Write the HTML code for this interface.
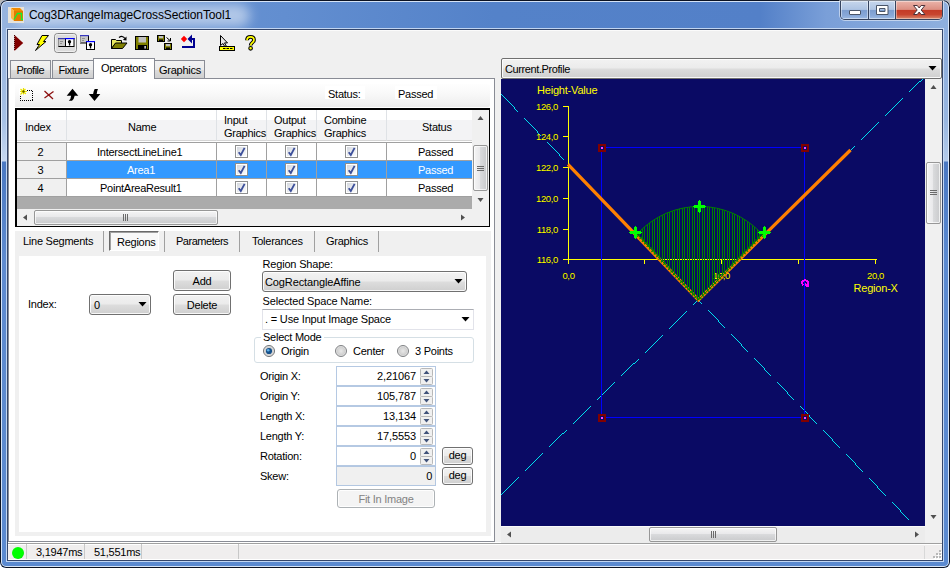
<!DOCTYPE html>
<html><head><meta charset="utf-8"><title>Cog3DRangeImageCrossSectionTool1</title>
<style>
*{box-sizing:border-box;margin:0;padding:0}
html,body{width:950px;height:568px;overflow:hidden;background:#fff}
body{font-family:"Liberation Sans",sans-serif;font-size:11px;color:#000;position:relative;letter-spacing:-0.25px}
.a{position:absolute}
.t{position:absolute;white-space:pre;line-height:13px;height:13px}
/* window frame */
#frame{left:0;top:0;width:950px;height:568px;border-radius:7px 7px 6px 6px;background:#5b8ad0;overflow:hidden}
#frame:after{content:"";position:absolute;left:0;top:0;right:0;bottom:0;border-radius:7px 7px 6px 6px;box-shadow:inset 0 0 0 1px #0b1222, inset 0 0 0 2px rgba(225,236,250,.92)}
#tbar{left:0;top:0;width:950px;height:30px;background:linear-gradient(90deg,#9ab6e0 0%,#7fa3d9 3%,#6a95d3 12%,#628ed0 30%,#5482c9 52%,#5380c8 80%,#7a9fd8 87%,#8fb0de 100%)}
#sideL{left:0;top:30px;width:8px;height:538px;background:linear-gradient(180deg,#98b4de 0px,#a6c0e5 90px,#c6d7ef 131px,#4a78c2 132px,#5f8bcf 230px,#5b8ad0 100%)}
#sideR{left:942px;top:30px;width:8px;height:538px;background:linear-gradient(180deg,#8aabdb 0px,#98b6e0 90px,#b4cbea 131px,#4a78c2 132px,#5b8ad0 230px,#5b8ad0 100%)}
#glow{left:14px;top:4px;width:236px;height:23px;border-radius:12px;background:rgba(255,255,255,.5);filter:blur(6px)}
#client{left:8px;top:30px;width:934px;height:530px;background:#f0f0f0;box-shadow:0 0 0 1px #34466a, 0 0 0 2px rgba(205,222,245,.9)}
.btn{position:absolute;border:1px solid #707070;border-radius:3px;background:linear-gradient(#f2f2f2 0%,#ebebeb 48%,#dddddd 52%,#cfcfcf 100%);box-shadow:inset 0 0 0 1px rgba(255,255,255,.85);text-align:center;white-space:pre}
.sep{position:absolute;width:1px;background:#a0a0a0}
.gh{position:absolute;background:linear-gradient(#ffffff 0px,#ffffff 10px,#f3f3f5 10px,#f3f3f5 100%);border-right:1px solid #dfe2e6;border-bottom:1px solid #d5d5d5}
.cb{position:absolute;width:13px;height:13px;border:1px solid #8e8f8f;background:linear-gradient(135deg,#cfd3da 0%,#e8eaee 50%,#ffffff 100%);box-shadow:inset 0 0 0 1px #fff}
.num{position:absolute;left:336px;width:100px;height:20px;border:1px solid #b5c9e3;background:#fff}
.spin{position:absolute;left:83px;top:1px;width:13px;height:17px}
</style></head><body>
<div class="a" style="left:0;top:0;width:950px;height:8px;background:#b8b8b8"></div>
<div id="frame" class="a">
<div id="tbar" class="a"></div><div id="sideL" class="a"></div><div id="sideR" class="a"></div>
<div id="glow" class="a"></div>
<div id="client" class="a"></div>
</div>

<!-- TITLE BAR -->
<svg class="a" style="left:8px;top:7px" width="16" height="16" viewBox="8 7 16 16"><rect x="8" y="7" width="16" height="16" fill="#e6e2da"/><polygon points="11,8 20,8 23,11 14,11" fill="#f08a00"/><polygon points="11,8 14,11 14,21 11,18" fill="#ffb347"/><rect x="14" y="11" width="9" height="10" fill="#e27a00"/><polyline points="14,19.500 17.500,13.500 21.500,13.500 21.500,19.500 23,19.500" fill="none" stroke="#10f030" stroke-width="1.300"/></svg>
<div class="t" style="left:29px;top:8px;font-size:12px;line-height:15px;height:15px;letter-spacing:-0.13px;color:#000">Cog3DRangeImageCrossSectionTool1</div>
<div class="a" id="capbtns" style="left:840px;top:1px;width:103px;height:19px;border:1px solid #35435e;border-top:none;border-radius:0 0 5px 5px;overflow:hidden;box-shadow:0 0 0 1px rgba(255,255,255,.5)">
 <div class="a" style="left:0;top:0;width:28px;height:18px;background:linear-gradient(#c6d6ec 0%,#aec4e3 47%,#7c9dcf 50%,#88a8d8 80%,#9dbbe4 100%);border-right:1px solid #35435e;box-shadow:inset 0 0 0 1px rgba(255,255,255,.45)"></div>
 <div class="a" style="left:28px;top:0;width:27px;height:18px;background:linear-gradient(#c6d6ec 0%,#aec4e3 47%,#7c9dcf 50%,#88a8d8 80%,#9dbbe4 100%);border-right:1px solid #35435e;box-shadow:inset 0 0 0 1px rgba(255,255,255,.45)"></div>
 <div class="a" style="left:55px;top:0;width:47px;height:18px;background:linear-gradient(#eab4aa 0%,#dc8f82 47%,#c43a26 50%,#c8452f 75%,#d98a6e 100%);box-shadow:inset 0 0 0 1px rgba(255,255,255,.4)"></div>
 <svg class="a" style="left:0;top:0" width="101" height="18" viewBox="0 0 101 18">
  <rect x="8.500" y="9.500" width="11" height="4" rx=".5" fill="#fff" stroke="#4a5568" stroke-width="1"/>
  <path d="M35.500 4.500h11.500v9h-11.500z M38.500 7.500h5.500v3h-5.500z" fill="#fff" fill-rule="evenodd" stroke="#4a5568" stroke-width="1"/>
  <path d="M72.500 4.500h3.800l1.900 2.500 1.900-2.500h3.800l-3.700 4.500 3.700 4.500h-3.800l-1.900-2.500-1.900 2.500h-3.800l3.700-4.500z" fill="#fff" stroke="#4a3038" stroke-width="1"/>
 </svg>
</div>


<!-- TOOLBAR -->
<div class="a" style="left:8px;top:30px;width:934px;height:1px;background:#fbfbfb"></div>
<svg class="a" style="left:0;top:30px" width="270" height="27" viewBox="0 30 270 27">
 <!-- run -->
 <polygon points="14.500,35 14.500,51 23.200,43" fill="#800000"/>
 <path d="M14.500 35v16" stroke="#400000" stroke-width="1" stroke-dasharray="1 1"/>
 <!-- lightning -->
 <polygon points="42,35.500 48.500,35.500 43.500,41.500 46,41.500 35.500,50.500 39.500,44.500 37,44.500" fill="#ffff00" stroke="#000" stroke-width="1" stroke-linejoin="miter"/>
 <!-- pressed button -->
 <rect x="54.500" y="33.500" width="22" height="19" rx="3" fill="#dcdcdc" stroke="#858585"/>
 <rect x="55.500" y="34.500" width="20" height="17" rx="2" fill="none" stroke="#efefef"/>
 <!-- two panes -->
 <rect x="58.500" y="38.500" width="7" height="8" fill="#c8c8c8" stroke="#000"/>
 <path d="M58.500 39v7.500" stroke="#909090"/>
 <rect x="58" y="38" width="8" height="1.200" fill="#3838a8"/>
 <path d="M60 41.500h3M60 43.500h2" stroke="#909090"/>
 <rect x="65.500" y="38.500" width="8.500" height="8" fill="#fff" stroke="#000"/>
 <rect x="65" y="38" width="9.500" height="1.200" fill="#0000ff"/>
 <circle cx="69.500" cy="41.700" r="1.700" fill="#000"/><rect x="68.900" y="42" width="1.300" height="3.500" fill="#000"/>
 <!-- floating panes -->
 <rect x="80.500" y="35.500" width="8" height="7.500" fill="#c8c8c8" stroke="#000"/>
 <path d="M80.500 36v7" stroke="#909090"/>
 <rect x="80" y="35" width="9" height="1.200" fill="#3838c0"/>
 <path d="M82 38.500h3M82 40.500h2" stroke="#909090"/>
 <rect x="86.500" y="41.500" width="8" height="8" fill="#fff" stroke="#000"/>
 <rect x="86" y="41" width="9" height="1.200" fill="#0000ff"/>
 <circle cx="90.500" cy="44.700" r="1.700" fill="#000"/><rect x="89.900" y="45" width="1.300" height="3.500" fill="#000"/>
 <!-- open folder -->
 <path d="M111.500 39.500h4l1 1h5v3h-6l-4 5z" fill="#e8e860" stroke="#000"/>
 <path d="M111.500 48.500l4-5.500h11.500l-4.500 5.500z" fill="#808000" stroke="#000"/>
 <path d="M119 37.500q3.500-2.500 6 1" fill="none" stroke="#000" stroke-width="1.200"/><polygon points="126.500,36.500 126.500,40.500 122.800,40" fill="#000"/>
 <!-- save -->
 <rect x="135.500" y="36.500" width="13" height="13" fill="#808000" stroke="#000"/>
 <rect x="138.500" y="37" width="7.500" height="5.500" fill="#c0c0c0"/>
 <rect x="138" y="45" width="9" height="4.500" fill="#000"/><rect x="144.300" y="46" width="1.700" height="2.600" fill="#c0c0c0"/>
 <!-- save all -->
 <rect x="157.500" y="35.500" width="7" height="6" fill="#808000" stroke="#000"/><rect x="159" y="36" width="4" height="2.200" fill="#c0c0c0"/><rect x="159" y="39.500" width="4" height="2" fill="#000"/>
 <rect x="164.500" y="43.500" width="7" height="6" fill="#808000" stroke="#000"/><rect x="166" y="44" width="4" height="2.200" fill="#c0c0c0"/><rect x="166" y="47.500" width="4" height="2" fill="#000"/>
 <path d="M166.500 37.500l3.500 3M170.500 38v3h-3" stroke="#000" fill="none"/>
 <!-- reset -->
 <polygon points="180.800,39 184,35.800 187.200,39 184,42.200" fill="#ff0000"/>
 <path d="M182 47h12v-8h-3" fill="none" stroke="#000090" stroke-width="2"/>
 <polygon points="187.500,39 192,34.500 192,43.500" fill="#000090"/>
 <!-- pointer / ruler -->
 <path d="M220.500 35.500v10l2.500-2 1.800 3.200 1.400-.8-1.700-3h3z" fill="#e8e8e8" stroke="#000"/>
 <rect x="219.500" y="46.500" width="15" height="4" fill="#ffff00" stroke="#000"/>
 <path d="M223 48.500h9.500" stroke="#000" stroke-dasharray="2.500 1"/>
 <!-- help -->
 <path d="M247 40.300q0-3.500 3.500-3.500t3.500 3.300q0 1.600-2 2.900q-1.300.9-1.300 2.600" fill="none" stroke="#000" stroke-width="3.800"/>
 <path d="M247 40.300q0-3.500 3.500-3.500t3.500 3.300q0 1.600-2 2.900q-1.300.9-1.300 2.600" fill="none" stroke="#ffff00" stroke-width="1.700"/>
 <circle cx="250.600" cy="48.300" r="1.800" fill="#ffff00" stroke="#000" stroke-width="1.100"/>
</svg>

<!-- MAIN TABS -->
<div class="a" style="left:8px;top:78px;width:487px;height:464px;border:1px solid #898c95;background:#fff"></div>
<div class="a" style="left:10px;top:60px;width:41px;height:18px;border:1px solid #898c95;border-bottom:none;background:linear-gradient(#f2f2f2 0%,#ebebeb 50%,#dddddd 50%,#cfcfcf 100%)"></div>
<div class="a" style="left:52px;top:60px;width:42px;height:18px;border:1px solid #898c95;border-bottom:none;background:linear-gradient(#f2f2f2 0%,#ebebeb 50%,#dddddd 50%,#cfcfcf 100%)"></div>
<div class="a" style="left:154px;top:60px;width:51px;height:18px;border:1px solid #898c95;border-bottom:none;border-left:none;background:linear-gradient(#f2f2f2 0%,#ebebeb 50%,#dddddd 50%,#cfcfcf 100%)"></div>
<div class="a" style="left:93px;top:58px;width:62px;height:21px;border:1px solid #898c95;border-bottom:none;background:#fff"></div>
<div class="t" style="left:16.500px;top:64px;letter-spacing:-0.5px">Profile</div>
<div class="t" style="left:58.500px;top:64px;letter-spacing:-0.5px">Fixture</div>
<div class="t" style="left:101px;top:62px;letter-spacing:-0.4px">Operators</div>
<div class="t" style="left:159px;top:64px">Graphics</div>

<!-- operator toolbar -->
<div class="a" style="left:15px;top:84px;width:475px;height:23px;background:linear-gradient(#fefefe 0%,#f8f8f8 45%,#f0f0f0 85%,#ebebeb 100%);border-radius:0 2px 2px 0"></div>
<svg class="a" style="left:15px;top:85px" width="100" height="20" viewBox="15 85 100 20">
 <path d="M20.500 90.500h12v10h-12z" fill="none" stroke="#000" stroke-width="1" stroke-dasharray="1 1" shape-rendering="crispEdges"/>
 <rect x="19" y="88" width="8" height="7" fill="#fff"/>
 <path d="M20.500 89l5.500 5M25.500 89l-5 5.500M23.500 88v6.500M20 91.500h7" stroke="#e8e000" stroke-width="1.200"/>
 <path d="M22 91.500l3 0M23.500 90v3" stroke="#404000" stroke-width=".6"/>
 <path d="M44.500 91l8.500 8M53.500 91.500l-9 6.500" stroke="#8c1010" stroke-width="1.300" fill="none"/>
 <path d="M72.500 88.800l5.800 6.900h-3.600q-.6 3.200-2.700 5.100h-3.200q2.200-2 2.300-5.100h-4.400z" fill="#000"/>
 <path d="M94.500 100.900l5.800-6.900h-3.600q.2-3 1.300-5.100h-3.300q-1.400 2.300-1.600 5.100h-4.400z" fill="#000"/>
</svg>
<div class="a" style="left:325px;top:86px;width:40px;height:13px;background:#fff"></div>
<div class="a" style="left:395px;top:86px;width:42px;height:13px;background:#fff"></div>
<div class="t" style="left:328px;top:88px">Status:</div>
<div class="t" style="left:398px;top:88px">Passed</div>


<!-- GRID -->
<div class="a" style="left:15px;top:108px;width:475px;height:119px;border:1px solid #000;border-top-width:2px;border-left-width:2px;background:#ababab"></div>
<div class="gh" style="left:17px;top:110px;width:50px;height:31px"></div>
<div class="gh" style="left:67px;top:110px;width:150px;height:31px"></div>
<div class="gh" style="left:217px;top:110px;width:50px;height:31px"></div>
<div class="gh" style="left:267px;top:110px;width:50px;height:31px"></div>
<div class="gh" style="left:317px;top:110px;width:70px;height:31px"></div>
<div class="gh" style="left:387px;top:110px;width:86px;height:31px"></div>
<div class="a" style="left:17px;top:141px;width:455px;height:2px;background:#fff;border-bottom:1px solid #a0a0a0"></div>
<div class="t" style="left:25px;top:121px">Index</div>
<div class="t" style="left:128px;top:121px">Name</div>
<div class="t" style="left:224px;top:114px">Input</div>
<div class="t" style="left:224px;top:127px">Graphics</div>
<div class="t" style="left:274px;top:114px">Output</div>
<div class="t" style="left:274px;top:127px">Graphics</div>
<div class="t" style="left:324px;top:114px">Combine</div>
<div class="t" style="left:324px;top:127px">Graphics</div>
<div class="t" style="left:422px;top:121px">Status</div>
<div class="a" style="left:17px;top:143px;width:50px;height:18px;background:#f0f0f0;border-right:1px solid #a0a0a0;border-bottom:1px solid #a0a0a0"></div><div class="t" style="left:37.500px;top:146px">2</div><div class="a" style="left:67px;top:143px;width:150px;height:18px;background:#fff;border-right:1px solid #a0a0a0;border-bottom:1px solid #a0a0a0"></div><div class="a" style="left:217px;top:143px;width:50px;height:18px;background:#fff;border-right:1px solid #a0a0a0;border-bottom:1px solid #a0a0a0"></div><div class="a" style="left:267px;top:143px;width:50px;height:18px;background:#fff;border-right:1px solid #a0a0a0;border-bottom:1px solid #a0a0a0"></div><div class="a" style="left:317px;top:143px;width:70px;height:18px;background:#fff;border-right:1px solid #a0a0a0;border-bottom:1px solid #a0a0a0"></div><div class="a" style="left:387px;top:143px;width:86px;height:18px;background:#fff;border-right:1px solid #a0a0a0;border-bottom:1px solid #a0a0a0"></div><div class="t" style="left:97px;top:146px;color:#000">IntersectLineLine1</div><div class="t" style="left:418px;top:146px;color:#000">Passed</div><div class="cb" style="left:235px;top:145px"></div><svg class="a" style="left:235px;top:145px" width="13" height="13" viewBox="0 0 13 13"><path d="M3.700 7.300 L5.800 10 L9.600 2.800" fill="none" stroke="#3c4f9a" stroke-width="1.800"/></svg><div class="cb" style="left:285px;top:145px"></div><svg class="a" style="left:285px;top:145px" width="13" height="13" viewBox="0 0 13 13"><path d="M3.700 7.300 L5.800 10 L9.600 2.800" fill="none" stroke="#3c4f9a" stroke-width="1.800"/></svg><div class="cb" style="left:345px;top:145px"></div><svg class="a" style="left:345px;top:145px" width="13" height="13" viewBox="0 0 13 13"><path d="M3.700 7.300 L5.800 10 L9.600 2.800" fill="none" stroke="#3c4f9a" stroke-width="1.800"/></svg><div class="a" style="left:17px;top:161px;width:50px;height:18px;background:#f0f0f0;border-right:1px solid #a0a0a0;border-bottom:1px solid #a0a0a0"></div><div class="t" style="left:37.500px;top:164px">3</div><div class="a" style="left:67px;top:161px;width:150px;height:18px;background:#3399ff;border-right:1px solid #a0a0a0;border-bottom:1px solid #a0a0a0"></div><div class="a" style="left:217px;top:161px;width:50px;height:18px;background:#3399ff;border-right:1px solid #a0a0a0;border-bottom:1px solid #a0a0a0"></div><div class="a" style="left:267px;top:161px;width:50px;height:18px;background:#3399ff;border-right:1px solid #a0a0a0;border-bottom:1px solid #a0a0a0"></div><div class="a" style="left:317px;top:161px;width:70px;height:18px;background:#3399ff;border-right:1px solid #a0a0a0;border-bottom:1px solid #a0a0a0"></div><div class="a" style="left:387px;top:161px;width:86px;height:18px;background:#3399ff;border-right:1px solid #a0a0a0;border-bottom:1px solid #a0a0a0"></div><div class="t" style="left:127px;top:164px;color:#fff">Area1</div><div class="t" style="left:418px;top:164px;color:#fff">Passed</div><div class="cb" style="left:235px;top:163px"></div><svg class="a" style="left:235px;top:163px" width="13" height="13" viewBox="0 0 13 13"><path d="M3.700 7.300 L5.800 10 L9.600 2.800" fill="none" stroke="#3c4f9a" stroke-width="1.800"/></svg><div class="cb" style="left:285px;top:163px"></div><svg class="a" style="left:285px;top:163px" width="13" height="13" viewBox="0 0 13 13"><path d="M3.700 7.300 L5.800 10 L9.600 2.800" fill="none" stroke="#3c4f9a" stroke-width="1.800"/></svg><div class="cb" style="left:345px;top:163px"></div><svg class="a" style="left:345px;top:163px" width="13" height="13" viewBox="0 0 13 13"><path d="M3.700 7.300 L5.800 10 L9.600 2.800" fill="none" stroke="#3c4f9a" stroke-width="1.800"/></svg><div class="a" style="left:17px;top:179px;width:50px;height:18px;background:#f0f0f0;border-right:1px solid #a0a0a0;border-bottom:1px solid #a0a0a0"></div><div class="t" style="left:37.500px;top:182px">4</div><div class="a" style="left:67px;top:179px;width:150px;height:18px;background:#fff;border-right:1px solid #a0a0a0;border-bottom:1px solid #a0a0a0"></div><div class="a" style="left:217px;top:179px;width:50px;height:18px;background:#fff;border-right:1px solid #a0a0a0;border-bottom:1px solid #a0a0a0"></div><div class="a" style="left:267px;top:179px;width:50px;height:18px;background:#fff;border-right:1px solid #a0a0a0;border-bottom:1px solid #a0a0a0"></div><div class="a" style="left:317px;top:179px;width:70px;height:18px;background:#fff;border-right:1px solid #a0a0a0;border-bottom:1px solid #a0a0a0"></div><div class="a" style="left:387px;top:179px;width:86px;height:18px;background:#fff;border-right:1px solid #a0a0a0;border-bottom:1px solid #a0a0a0"></div><div class="t" style="left:100px;top:182px;color:#000">PointAreaResult1</div><div class="t" style="left:418px;top:182px;color:#000">Passed</div><div class="cb" style="left:235px;top:181px"></div><svg class="a" style="left:235px;top:181px" width="13" height="13" viewBox="0 0 13 13"><path d="M3.700 7.300 L5.800 10 L9.600 2.800" fill="none" stroke="#3c4f9a" stroke-width="1.800"/></svg><div class="cb" style="left:285px;top:181px"></div><svg class="a" style="left:285px;top:181px" width="13" height="13" viewBox="0 0 13 13"><path d="M3.700 7.300 L5.800 10 L9.600 2.800" fill="none" stroke="#3c4f9a" stroke-width="1.800"/></svg><div class="cb" style="left:345px;top:181px"></div><svg class="a" style="left:345px;top:181px" width="13" height="13" viewBox="0 0 13 13"><path d="M3.700 7.300 L5.800 10 L9.600 2.800" fill="none" stroke="#3c4f9a" stroke-width="1.800"/></svg>
<!-- grid vscroll -->
<div class="a" style="left:472px;top:110px;width:17px;height:99px;background:#f0f0f0"></div>
<div class="a" style="left:473px;top:145px;width:15px;height:46px;border:1px solid #979797;border-radius:2px;background:linear-gradient(90deg,#f5f5f5 0%,#e9e9eb 45%,#d9dadc 50%,#c9cacc 100%);box-shadow:inset 0 0 0 1px rgba(255,255,255,.7)"></div>
<svg class="a" style="left:472px;top:110px" width="17" height="98" viewBox="0 0 17 98"><polygon points="5.500,10 8.500,6 11.500,10" fill="#505050"/><polygon points="5.500,88 8.500,92 11.500,88" fill="#505050"/><path d="M5 56.500h7M5 58.500h7M5 60.500h7" stroke="#6a6a6a"/></svg>
<!-- grid hscroll -->
<div class="a" style="left:17px;top:209px;width:472px;height:17px;background:#f0f0f0"></div>
<div class="a" style="left:34px;top:210px;width:184px;height:15px;border:1px solid #979797;border-radius:2px;background:linear-gradient(#f5f5f5 0%,#e9e9eb 45%,#d9dadc 50%,#c9cacc 100%);box-shadow:inset 0 0 0 1px rgba(255,255,255,.7)"></div>
<svg class="a" style="left:17px;top:209px" width="472" height="17" viewBox="0 0 472 17"><polygon points="10,5.500 6,8.500 10,11.500" fill="#505050"/><polygon points="444,5.500 448,8.500 444,11.500" fill="#505050"/><path d="M106.500 5v7M108.500 5v7M110.500 5v7" stroke="#6a6a6a"/></svg>

<!-- INNER TABS -->
<div class="a" style="left:15px;top:231px;width:476px;height:305px;background:#f0f0f0"></div>
<div class="a" style="left:19px;top:256px;width:467px;height:276px;background:#fff"></div>
<div class="sep" style="left:103px;top:231px;height:21px"></div>
<div class="sep" style="left:164px;top:231px;height:21px"></div>
<div class="sep" style="left:239px;top:231px;height:21px"></div>
<div class="sep" style="left:314px;top:231px;height:21px"></div>
<div class="sep" style="left:378px;top:231px;height:21px"></div>
<div class="a" style="left:109px;top:231px;width:50px;height:20px;border:1px solid #696969;border-right-color:#fff;border-bottom-color:#fff;background:#f8f8f8;box-shadow:inset 1px 1px 0 #a0a0a0"></div>
<div class="t" style="left:23px;top:235px">Line Segments</div>
<div class="t" style="left:117px;top:236px">Regions</div>
<div class="t" style="left:176px;top:235px;letter-spacing:-0.47px">Parameters</div>
<div class="t" style="left:252px;top:235px">Tolerances</div>
<div class="t" style="left:326px;top:235px">Graphics</div>

<div class="btn" style="left:173px;top:270px;width:58px;height:21px;line-height:20px">Add</div>
<div class="btn" style="left:173px;top:294px;width:58px;height:21px;line-height:20px">Delete</div>
<div class="t" style="left:28px;top:298px">Index:</div>
<div class="btn" style="left:89px;top:294px;width:62px;height:21px;line-height:20px;text-align:left;padding-left:4px">0</div>
<svg class="a" style="left:138px;top:302px" width="9" height="5"><polygon points="0.500,0 8.500,0 4.500,4.500" fill="#000"/></svg>

<div class="t" style="left:262.500px;top:258px;letter-spacing:-0.18px">Region Shape:</div>
<div class="btn" style="left:262px;top:271px;width:205px;height:21px;line-height:20px;text-align:left;padding-left:2px;letter-spacing:-0.12px">CogRectangleAffine</div>
<svg class="a" style="left:454px;top:279px" width="9" height="5"><polygon points="0.500,0 8.500,0 4.500,4.500" fill="#000"/></svg>
<div class="t" style="left:262.500px;top:295px;letter-spacing:-0.15px">Selected Space Name:</div>
<div class="a" style="left:262px;top:309px;width:212px;height:21px;border:1px solid #e2e3ea;border-top-color:#abadb3;background:#fff"></div>
<div class="t" style="left:265px;top:313px;letter-spacing:-0.18px">. = Use Input Image Space</div>
<svg class="a" style="left:461px;top:317px" width="9" height="5"><polygon points="0.500,0 8.500,0 4.500,4.500" fill="#000"/></svg>

<div class="a" style="left:254px;top:337px;width:220px;height:26px;border:1px solid #d5dfe5;border-radius:3px"></div>
<div class="a" style="left:261px;top:332px;width:63px;height:13px;background:#fff"></div>
<div class="t" style="left:263px;top:331px">Select Mode</div>
<svg class="a" style="left:262px;top:344px" width="150" height="14" viewBox="0 0 150 14">
 <defs><radialGradient id="rg" cx=".5" cy=".5" r=".5"><stop offset="0" stop-color="#e8e8e8"/><stop offset=".7" stop-color="#d0d0d0"/><stop offset="1" stop-color="#f4f4f4"/></radialGradient></defs>
 <circle cx="7" cy="7" r="5.500" fill="url(#rg)" stroke="#6e7073"/><circle cx="7" cy="7" r="3.100" fill="#15508a"/><circle cx="6.200" cy="6.200" r="1.300" fill="#5fb0e8"/>
 <circle cx="79" cy="7" r="5.500" fill="url(#rg)" stroke="#7e8083"/>
 <circle cx="141" cy="7" r="5.500" fill="url(#rg)" stroke="#7e8083"/>
</svg>
<div class="t" style="left:281px;top:345px">Origin</div>
<div class="t" style="left:353px;top:345px">Center</div>
<div class="t" style="left:415px;top:345px">3 Points</div>
<div class="t" style="left:260px;top:370px">Origin X:</div><div class="num" style="top:366px"><svg class="spin" width="13" height="17" viewBox="0 0 13 17"><rect x=".5" y=".5" width="12" height="8" rx="1" fill="#f0f0f0" stroke="#b8b8b8"/><rect x=".5" y="8.500" width="12" height="8" rx="1" fill="#f0f0f0" stroke="#b8b8b8"/><polygon points="3.500,6 6.500,2.500 9.500,6" fill="#40527a"/><polygon points="3.500,11 6.500,14.500 9.500,11" fill="#40527a"/></svg></div><div class="t" style="left:340px;width:76px;text-align:right;top:370px;letter-spacing:-0.1px">2,21067</div><div class="t" style="left:260px;top:390px">Origin Y:</div><div class="num" style="top:386px"><svg class="spin" width="13" height="17" viewBox="0 0 13 17"><rect x=".5" y=".5" width="12" height="8" rx="1" fill="#f0f0f0" stroke="#b8b8b8"/><rect x=".5" y="8.500" width="12" height="8" rx="1" fill="#f0f0f0" stroke="#b8b8b8"/><polygon points="3.500,6 6.500,2.500 9.500,6" fill="#40527a"/><polygon points="3.500,11 6.500,14.500 9.500,11" fill="#40527a"/></svg></div><div class="t" style="left:340px;width:76px;text-align:right;top:390px;letter-spacing:-0.1px">105,787</div><div class="t" style="left:260px;top:410px">Length X:</div><div class="num" style="top:406px"><svg class="spin" width="13" height="17" viewBox="0 0 13 17"><rect x=".5" y=".5" width="12" height="8" rx="1" fill="#f0f0f0" stroke="#b8b8b8"/><rect x=".5" y="8.500" width="12" height="8" rx="1" fill="#f0f0f0" stroke="#b8b8b8"/><polygon points="3.500,6 6.500,2.500 9.500,6" fill="#40527a"/><polygon points="3.500,11 6.500,14.500 9.500,11" fill="#40527a"/></svg></div><div class="t" style="left:340px;width:76px;text-align:right;top:410px;letter-spacing:-0.1px">13,134</div><div class="t" style="left:260px;top:430px">Length Y:</div><div class="num" style="top:426px"><svg class="spin" width="13" height="17" viewBox="0 0 13 17"><rect x=".5" y=".5" width="12" height="8" rx="1" fill="#f0f0f0" stroke="#b8b8b8"/><rect x=".5" y="8.500" width="12" height="8" rx="1" fill="#f0f0f0" stroke="#b8b8b8"/><polygon points="3.500,6 6.500,2.500 9.500,6" fill="#40527a"/><polygon points="3.500,11 6.500,14.500 9.500,11" fill="#40527a"/></svg></div><div class="t" style="left:340px;width:76px;text-align:right;top:430px;letter-spacing:-0.1px">17,5553</div><div class="t" style="left:260px;top:450px">Rotation:</div><div class="num" style="top:446px"><svg class="spin" width="13" height="17" viewBox="0 0 13 17"><rect x=".5" y=".5" width="12" height="8" rx="1" fill="#f0f0f0" stroke="#b8b8b8"/><rect x=".5" y="8.500" width="12" height="8" rx="1" fill="#f0f0f0" stroke="#b8b8b8"/><polygon points="3.500,6 6.500,2.500 9.500,6" fill="#40527a"/><polygon points="3.500,11 6.500,14.500 9.500,11" fill="#40527a"/></svg></div><div class="t" style="left:340px;width:76px;text-align:right;top:450px;letter-spacing:-0.1px">0</div><div class="t" style="left:260px;top:470px">Skew:</div><div class="num" style="top:466px;background:#f0f0f0;border-color:#b3c7e1"></div><div class="t" style="left:340px;width:92px;text-align:right;top:470px">0</div>
<div class="btn" style="left:442px;top:447px;width:31px;height:18px;line-height:14px">deg</div>
<div class="btn" style="left:442px;top:467px;width:31px;height:18px;line-height:14px">deg</div>
<div class="btn" style="left:337px;top:489px;width:98px;height:19px;line-height:18px;color:#838383;border-color:#adb2b5;background:#f4f4f4">Fit In Image</div>

<!-- STATUS BAR -->
<div class="a" style="left:8px;top:542px;width:934px;height:18px;background:#f0eeee;border-top:1px solid #fff;border-bottom:1px solid #fff"></div><div class="a" style="left:8px;top:543px;width:934px;height:2px;background:#fff;border-top:1px solid #a0a0a0"></div>
<div class="a" style="left:12px;top:547px;width:12px;height:12px;border-radius:6px;background:radial-gradient(circle at 40% 40%,#00ff00 0%,#00ff00 62%,#00a800 100%)"></div>
<div class="t" style="left:36px;top:546px">3,1947ms</div>
<div class="t" style="left:94px;top:546px">51,551ms</div>
<div class="sep" style="left:26px;top:544px;height:15px;background:#c8c8c8"></div>
<div class="sep" style="left:84px;top:544px;height:15px;background:#c8c8c8"></div>
<div class="sep" style="left:141px;top:544px;height:15px;background:#c8c8c8"></div>
<div class="sep" style="left:238px;top:544px;height:15px;background:#c8c8c8"></div>


<!-- RIGHT PANEL -->
<div class="btn" style="left:501px;top:58px;width:441px;height:21px;line-height:20px;text-align:left;padding-left:3px;border-radius:2px;letter-spacing:-0.4px">Current.Profile</div>
<svg class="a" style="left:928px;top:66px" width="9" height="5"><polygon points="0.500,0 8.500,0 4.500,4.500" fill="#000"/></svg>
<svg class="a" style="left:501px;top:79px;font-family:'Liberation Sans',sans-serif" width="424" height="447" viewBox="0 0 424 447" shape-rendering="crispEdges">
<defs><pattern id="hat" width="5" height="10" patternUnits="userSpaceOnUse" x="0"><rect x="1" y="0" width="1" height="10" fill="#008000"/><rect x="3" y="0" width="1" height="10" fill="#008000"/></pattern>
<clipPath id="sec"><path d="M197.4 221.0 L134.5 153.5 L137.5 153.6 A84.27 84.27 0 0 1 259.8 153.8 L263.5 153.5 Z"/></clipPath></defs>
<rect width="424" height="447" fill="#0a0a64"/>
<path fill="#00e0ee" d="M0 15h1v1h-1zM0 415h1v1h-1zM1 16h1v1h-1zM1 414h1v1h-1zM2 17h1v1h-1zM2 413h1v1h-1zM3 18h1v1h-1zM3 412h1v1h-1zM4 19h1v1h-1zM4 411h1v1h-1zM5 20h1v1h-1zM5 410h1v1h-1zM6 21h1v1h-1zM6 409h1v1h-1zM7 22h1v1h-1zM7 408h1v1h-1zM8 23h1v1h-1zM8 407h1v1h-1zM9 24h1v1h-1zM9 406h1v1h-1zM10 25h1v1h-1zM10 405h1v1h-1zM11 26h1v1h-1zM11 404h1v1h-1zM12 27h1v1h-1zM12 403h1v1h-1zM13 28h1v1h-1zM13 29h1v1h-1zM13 402h1v1h-1zM14 30h1v1h-1zM14 401h1v1h-1zM15 31h1v1h-1zM15 400h1v1h-1zM16 32h1v1h-1zM16 399h1v1h-1zM17 398h1v1h-1zM23 39h1v1h-1zM24 40h1v1h-1zM24 391h1v1h-1zM25 41h1v1h-1zM25 390h1v1h-1zM26 42h1v1h-1zM26 389h1v1h-1zM27 43h1v1h-1zM27 388h1v1h-1zM28 44h1v1h-1zM28 387h1v1h-1zM29 45h1v1h-1zM29 386h1v1h-1zM30 46h1v1h-1zM30 385h1v1h-1zM31 47h1v1h-1zM31 384h1v1h-1zM32 48h1v1h-1zM32 383h1v1h-1zM33 49h1v1h-1zM33 382h1v1h-1zM34 50h1v1h-1zM34 381h1v1h-1zM35 51h1v1h-1zM35 380h1v1h-1zM36 52h1v1h-1zM36 53h1v1h-1zM36 379h1v1h-1zM37 54h1v1h-1zM37 378h1v1h-1zM38 55h1v1h-1zM38 377h1v1h-1zM39 56h1v1h-1zM39 376h1v1h-1zM40 375h1v1h-1zM41 374h1v1h-1zM46 63h1v1h-1zM47 64h1v1h-1zM48 65h1v1h-1zM48 367h1v1h-1zM49 66h1v1h-1zM49 366h1v1h-1zM50 67h1v1h-1zM50 365h1v1h-1zM51 68h1v1h-1zM51 364h1v1h-1zM52 69h1v1h-1zM52 363h1v1h-1zM53 70h1v1h-1zM53 362h1v1h-1zM54 71h1v1h-1zM54 361h1v1h-1zM55 72h1v1h-1zM55 360h1v1h-1zM56 73h1v1h-1zM56 359h1v1h-1zM57 74h1v1h-1zM57 358h1v1h-1zM58 75h1v1h-1zM58 76h1v1h-1zM58 357h1v1h-1zM59 77h1v1h-1zM59 356h1v1h-1zM60 78h1v1h-1zM60 355h1v1h-1zM61 79h1v1h-1zM61 354h1v1h-1zM62 80h1v1h-1zM62 354h1v1h-1zM63 353h1v1h-1zM64 352h1v1h-1zM65 351h1v1h-1zM69 87h1v1h-1zM70 88h1v1h-1zM71 89h1v1h-1zM72 90h1v1h-1zM72 344h1v1h-1zM73 91h1v1h-1zM73 343h1v1h-1zM74 92h1v1h-1zM74 342h1v1h-1zM75 93h1v1h-1zM75 341h1v1h-1zM76 94h1v1h-1zM76 340h1v1h-1zM77 95h1v1h-1zM77 339h1v1h-1zM78 96h1v1h-1zM78 338h1v1h-1zM79 97h1v1h-1zM79 337h1v1h-1zM80 98h1v1h-1zM80 336h1v1h-1zM81 99h1v1h-1zM81 100h1v1h-1zM81 335h1v1h-1zM82 101h1v1h-1zM82 334h1v1h-1zM83 102h1v1h-1zM83 333h1v1h-1zM84 103h1v1h-1zM84 332h1v1h-1zM85 104h1v1h-1zM85 331h1v1h-1zM86 330h1v1h-1zM87 329h1v1h-1zM88 328h1v1h-1zM89 327h1v1h-1zM92 111h1v1h-1zM93 112h1v1h-1zM94 113h1v1h-1zM95 114h1v1h-1zM96 115h1v1h-1zM96 320h1v1h-1zM97 116h1v1h-1zM97 319h1v1h-1zM98 117h1v1h-1zM98 318h1v1h-1zM99 118h1v1h-1zM99 317h1v1h-1zM100 119h1v1h-1zM100 316h1v1h-1zM101 120h1v1h-1zM101 315h1v1h-1zM102 121h1v1h-1zM102 314h1v1h-1zM103 122h1v1h-1zM103 313h1v1h-1zM104 123h1v1h-1zM104 124h1v1h-1zM104 312h1v1h-1zM105 125h1v1h-1zM105 311h1v1h-1zM106 126h1v1h-1zM106 310h1v1h-1zM107 127h1v1h-1zM107 309h1v1h-1zM108 128h1v1h-1zM108 308h1v1h-1zM109 307h1v1h-1zM110 306h1v1h-1zM111 305h1v1h-1zM112 304h1v1h-1zM113 303h1v1h-1zM115 135h1v1h-1zM116 136h1v1h-1zM117 137h1v1h-1zM118 138h1v1h-1zM119 139h1v1h-1zM120 140h1v1h-1zM120 296h1v1h-1zM121 141h1v1h-1zM121 295h1v1h-1zM122 142h1v1h-1zM122 294h1v1h-1zM123 143h1v1h-1zM123 293h1v1h-1zM124 144h1v1h-1zM124 292h1v1h-1zM125 145h1v1h-1zM125 291h1v1h-1zM126 146h1v1h-1zM126 147h1v1h-1zM126 290h1v1h-1zM127 148h1v1h-1zM127 289h1v1h-1zM128 149h1v1h-1zM128 288h1v1h-1zM129 150h1v1h-1zM129 287h1v1h-1zM130 151h1v1h-1zM130 286h1v1h-1zM131 152h1v1h-1zM131 285h1v1h-1zM132 284h1v1h-1zM133 284h1v1h-1zM134 283h1v1h-1zM135 282h1v1h-1zM136 281h1v1h-1zM137 280h1v1h-1zM138 159h1v1h-1zM139 160h1v1h-1zM140 161h1v1h-1zM141 162h1v1h-1zM142 163h1v1h-1zM143 164h1v1h-1zM144 165h1v1h-1zM144 273h1v1h-1zM145 166h1v1h-1zM145 272h1v1h-1zM146 167h1v1h-1zM146 271h1v1h-1zM147 168h1v1h-1zM147 270h1v1h-1zM148 169h1v1h-1zM148 269h1v1h-1zM149 170h1v1h-1zM149 171h1v1h-1zM149 268h1v1h-1zM150 172h1v1h-1zM150 267h1v1h-1zM151 173h1v1h-1zM151 266h1v1h-1zM152 174h1v1h-1zM152 265h1v1h-1zM153 175h1v1h-1zM153 264h1v1h-1zM154 176h1v1h-1zM154 263h1v1h-1zM155 262h1v1h-1zM156 261h1v1h-1zM157 260h1v1h-1zM158 259h1v1h-1zM159 258h1v1h-1zM160 257h1v1h-1zM161 183h1v1h-1zM161 256h1v1h-1zM162 184h1v1h-1zM163 185h1v1h-1zM164 186h1v1h-1zM165 187h1v1h-1zM166 188h1v1h-1zM167 189h1v1h-1zM168 190h1v1h-1zM168 249h1v1h-1zM169 191h1v1h-1zM169 248h1v1h-1zM170 192h1v1h-1zM170 247h1v1h-1zM171 193h1v1h-1zM171 246h1v1h-1zM172 194h1v1h-1zM172 195h1v1h-1zM172 245h1v1h-1zM173 196h1v1h-1zM173 244h1v1h-1zM174 197h1v1h-1zM174 243h1v1h-1zM175 198h1v1h-1zM175 242h1v1h-1zM176 199h1v1h-1zM176 241h1v1h-1zM177 200h1v1h-1zM177 240h1v1h-1zM178 239h1v1h-1zM179 238h1v1h-1zM180 237h1v1h-1zM181 236h1v1h-1zM182 235h1v1h-1zM183 234h1v1h-1zM184 207h1v1h-1zM184 233h1v1h-1zM185 208h1v1h-1zM185 232h1v1h-1zM186 209h1v1h-1zM187 210h1v1h-1zM188 211h1v1h-1zM189 212h1v1h-1zM190 213h1v1h-1zM191 214h1v1h-1zM192 215h1v1h-1zM192 225h1v1h-1zM193 216h1v1h-1zM193 224h1v1h-1zM194 217h1v1h-1zM194 223h1v1h-1zM195 218h1v1h-1zM195 219h1v1h-1zM195 222h1v1h-1zM196 220h1v1h-1zM196 221h1v1h-1zM197 220h1v1h-1zM197 221h1v1h-1zM198 219h1v1h-1zM198 222h1v1h-1zM199 218h1v1h-1zM199 223h1v1h-1zM200 217h1v1h-1zM200 224h1v1h-1zM201 216h1v1h-1zM202 215h1v1h-1zM203 214h1v1h-1zM204 213h1v1h-1zM205 213h1v1h-1zM206 212h1v1h-1zM207 211h1v1h-1zM207 231h1v1h-1zM208 210h1v1h-1zM208 232h1v1h-1zM209 209h1v1h-1zM209 233h1v1h-1zM210 234h1v1h-1zM211 235h1v1h-1zM212 236h1v1h-1zM213 237h1v1h-1zM214 238h1v1h-1zM215 239h1v1h-1zM216 202h1v1h-1zM216 240h1v1h-1zM217 201h1v1h-1zM217 241h1v1h-1zM217 242h1v1h-1zM218 200h1v1h-1zM218 243h1v1h-1zM219 199h1v1h-1zM219 244h1v1h-1zM220 198h1v1h-1zM220 245h1v1h-1zM221 197h1v1h-1zM221 246h1v1h-1zM222 196h1v1h-1zM222 247h1v1h-1zM223 195h1v1h-1zM223 248h1v1h-1zM224 194h1v1h-1zM225 193h1v1h-1zM226 192h1v1h-1zM227 191h1v1h-1zM228 190h1v1h-1zM229 189h1v1h-1zM230 188h1v1h-1zM230 255h1v1h-1zM231 187h1v1h-1zM231 256h1v1h-1zM232 186h1v1h-1zM232 257h1v1h-1zM233 185h1v1h-1zM233 258h1v1h-1zM234 259h1v1h-1zM235 260h1v1h-1zM236 261h1v1h-1zM237 262h1v1h-1zM238 263h1v1h-1zM239 264h1v1h-1zM240 178h1v1h-1zM240 265h1v1h-1zM240 266h1v1h-1zM241 177h1v1h-1zM241 267h1v1h-1zM242 176h1v1h-1zM242 268h1v1h-1zM243 175h1v1h-1zM243 269h1v1h-1zM244 174h1v1h-1zM244 270h1v1h-1zM245 173h1v1h-1zM245 271h1v1h-1zM246 172h1v1h-1zM246 272h1v1h-1zM247 171h1v1h-1zM248 170h1v1h-1zM249 169h1v1h-1zM250 168h1v1h-1zM251 167h1v1h-1zM252 166h1v1h-1zM253 165h1v1h-1zM253 279h1v1h-1zM254 164h1v1h-1zM254 280h1v1h-1zM255 163h1v1h-1zM255 281h1v1h-1zM256 162h1v1h-1zM256 282h1v1h-1zM257 161h1v1h-1zM257 283h1v1h-1zM258 284h1v1h-1zM259 285h1v1h-1zM260 286h1v1h-1zM261 287h1v1h-1zM262 288h1v1h-1zM263 289h1v1h-1zM263 290h1v1h-1zM264 154h1v1h-1zM264 291h1v1h-1zM265 153h1v1h-1zM265 292h1v1h-1zM266 152h1v1h-1zM266 293h1v1h-1zM267 151h1v1h-1zM267 294h1v1h-1zM268 150h1v1h-1zM268 295h1v1h-1zM269 149h1v1h-1zM269 296h1v1h-1zM270 148h1v1h-1zM271 147h1v1h-1zM272 146h1v1h-1zM273 145h1v1h-1zM274 144h1v1h-1zM275 143h1v1h-1zM276 143h1v1h-1zM276 303h1v1h-1zM277 142h1v1h-1zM277 304h1v1h-1zM278 141h1v1h-1zM278 305h1v1h-1zM279 140h1v1h-1zM279 306h1v1h-1zM280 139h1v1h-1zM280 307h1v1h-1zM281 138h1v1h-1zM281 308h1v1h-1zM282 309h1v1h-1zM283 310h1v1h-1zM284 311h1v1h-1zM285 312h1v1h-1zM286 313h1v1h-1zM286 314h1v1h-1zM287 315h1v1h-1zM288 131h1v1h-1zM288 316h1v1h-1zM289 130h1v1h-1zM289 317h1v1h-1zM290 129h1v1h-1zM290 318h1v1h-1zM291 128h1v1h-1zM291 319h1v1h-1zM292 127h1v1h-1zM292 320h1v1h-1zM293 126h1v1h-1zM294 125h1v1h-1zM295 124h1v1h-1zM296 123h1v1h-1zM297 122h1v1h-1zM298 121h1v1h-1zM299 120h1v1h-1zM299 327h1v1h-1zM300 119h1v1h-1zM300 328h1v1h-1zM301 118h1v1h-1zM301 329h1v1h-1zM302 117h1v1h-1zM302 330h1v1h-1zM303 116h1v1h-1zM303 331h1v1h-1zM304 115h1v1h-1zM304 332h1v1h-1zM305 114h1v1h-1zM305 333h1v1h-1zM306 334h1v1h-1zM307 335h1v1h-1zM308 336h1v1h-1zM308 337h1v1h-1zM309 338h1v1h-1zM310 339h1v1h-1zM311 340h1v1h-1zM312 107h1v1h-1zM312 341h1v1h-1zM313 106h1v1h-1zM313 342h1v1h-1zM314 105h1v1h-1zM314 343h1v1h-1zM315 104h1v1h-1zM315 344h1v1h-1zM316 103h1v1h-1zM317 102h1v1h-1zM318 101h1v1h-1zM319 100h1v1h-1zM320 99h1v1h-1zM321 98h1v1h-1zM322 97h1v1h-1zM322 351h1v1h-1zM323 96h1v1h-1zM323 352h1v1h-1zM324 95h1v1h-1zM324 353h1v1h-1zM325 94h1v1h-1zM325 354h1v1h-1zM326 93h1v1h-1zM326 355h1v1h-1zM327 92h1v1h-1zM327 356h1v1h-1zM328 91h1v1h-1zM328 357h1v1h-1zM329 90h1v1h-1zM329 358h1v1h-1zM330 359h1v1h-1zM331 360h1v1h-1zM331 361h1v1h-1zM332 362h1v1h-1zM333 363h1v1h-1zM334 364h1v1h-1zM335 365h1v1h-1zM336 83h1v1h-1zM336 366h1v1h-1zM337 82h1v1h-1zM337 367h1v1h-1zM338 81h1v1h-1zM338 368h1v1h-1zM339 80h1v1h-1zM340 79h1v1h-1zM341 78h1v1h-1zM342 77h1v1h-1zM343 76h1v1h-1zM344 75h1v1h-1zM345 74h1v1h-1zM345 375h1v1h-1zM346 73h1v1h-1zM346 376h1v1h-1zM347 73h1v1h-1zM347 377h1v1h-1zM348 72h1v1h-1zM348 378h1v1h-1zM349 71h1v1h-1zM349 379h1v1h-1zM350 70h1v1h-1zM350 380h1v1h-1zM351 69h1v1h-1zM351 381h1v1h-1zM352 68h1v1h-1zM352 382h1v1h-1zM353 67h1v1h-1zM353 383h1v1h-1zM354 384h1v1h-1zM354 385h1v1h-1zM355 386h1v1h-1zM356 387h1v1h-1zM357 388h1v1h-1zM358 389h1v1h-1zM359 390h1v1h-1zM360 60h1v1h-1zM360 391h1v1h-1zM361 59h1v1h-1zM361 392h1v1h-1zM362 58h1v1h-1zM363 57h1v1h-1zM364 56h1v1h-1zM365 55h1v1h-1zM366 54h1v1h-1zM367 53h1v1h-1zM368 52h1v1h-1zM368 399h1v1h-1zM369 51h1v1h-1zM369 400h1v1h-1zM370 50h1v1h-1zM370 401h1v1h-1zM371 49h1v1h-1zM371 402h1v1h-1zM372 48h1v1h-1zM372 403h1v1h-1zM373 47h1v1h-1zM373 404h1v1h-1zM374 46h1v1h-1zM374 405h1v1h-1zM375 45h1v1h-1zM375 406h1v1h-1zM376 44h1v1h-1zM376 407h1v1h-1zM376 408h1v1h-1zM377 43h1v1h-1zM377 409h1v1h-1zM378 410h1v1h-1zM379 411h1v1h-1zM380 412h1v1h-1zM381 413h1v1h-1zM382 414h1v1h-1zM383 415h1v1h-1zM384 36h1v1h-1zM384 416h1v1h-1zM385 35h1v1h-1zM386 34h1v1h-1zM387 33h1v1h-1zM388 32h1v1h-1zM389 31h1v1h-1zM390 30h1v1h-1zM391 29h1v1h-1zM391 423h1v1h-1zM392 28h1v1h-1zM392 424h1v1h-1zM393 27h1v1h-1zM393 425h1v1h-1zM394 26h1v1h-1zM394 426h1v1h-1zM395 25h1v1h-1zM395 427h1v1h-1zM396 24h1v1h-1zM396 428h1v1h-1zM397 23h1v1h-1zM397 429h1v1h-1zM398 22h1v1h-1zM398 430h1v1h-1zM399 21h1v1h-1zM399 431h1v1h-1zM399 432h1v1h-1zM400 20h1v1h-1zM400 433h1v1h-1zM401 19h1v1h-1zM401 434h1v1h-1zM402 435h1v1h-1zM403 436h1v1h-1zM404 437h1v1h-1zM405 438h1v1h-1zM406 439h1v1h-1zM407 440h1v1h-1zM408 12h1v1h-1zM409 11h1v1h-1zM410 10h1v1h-1zM411 9h1v1h-1zM412 8h1v1h-1zM413 7h1v1h-1zM414 6h1v1h-1zM415 5h1v1h-1zM416 4h1v1h-1zM417 3h1v1h-1zM418 2h1v1h-1zM419 2h1v1h-1zM420 1h1v1h-1zM421 0h1v1h-1z"/>
<!-- axes -->
<g fill="#ffff00"><rect x="67" y="27" width="1" height="154"/><rect x="67" y="180" width="309" height="1"/><rect x="62" y="27" width="5" height="1"/><rect x="62" y="57" width="5" height="1"/><rect x="62" y="88" width="5" height="1"/><rect x="62" y="119" width="5" height="1"/><rect x="62" y="150" width="5" height="1"/><rect x="62" y="180" width="5" height="1"/><rect x="67" y="180" width="1" height="5"/><rect x="143" y="180" width="1" height="5"/><rect x="220" y="180" width="1" height="5"/><rect x="297" y="180" width="1" height="5"/><rect x="374" y="180" width="1" height="5"/></g>
<g fill="#ffff00" font-size="9.500px" letter-spacing="-0.35" shape-rendering="auto" style="text-shadow:0 0 1px #000"><text x="57" y="30.5" text-anchor="end">126,0</text><text x="57" y="60.5" text-anchor="end">124,0</text><text x="57" y="91.5" text-anchor="end">122,0</text><text x="57" y="122.5" text-anchor="end">120,0</text><text x="57" y="153.5" text-anchor="end">118,0</text><text x="57" y="183.5" text-anchor="end">116,0</text><text x="67.5" y="200" text-anchor="middle">0,0</text><text x="220.5" y="200" text-anchor="middle">10,0</text><text x="374.5" y="200" text-anchor="middle">20,0</text></g>
<text x="36" y="15" fill="#ffff00" font-size="11px" letter-spacing="-0.2">Height-Value</text>
<text x="352.5" y="213" fill="#ffff00" font-size="11px" letter-spacing="-0.2">Region-X</text>
<!-- region rect -->
<g fill="#0000ff"><rect x="100" y="68" width="204" height="1"/><rect x="100" y="338" width="204" height="1"/><rect x="100" y="68" width="1" height="270"/><rect x="303" y="68" width="1" height="270"/></g>
<!-- profile -->
<g stroke="#ff8000" stroke-width="3.300" fill="none" shape-rendering="auto" stroke-linecap="butt"><path d="M67 85.30000000000001 L197.4 221.0 L349.5 71"/></g>
<!-- sector hatch -->
<g clip-path="url(#sec)"><rect x="100" y="100" width="200" height="130" fill="url(#hat)"/></g>
<path d="M197.4 221.0 L134.5 153.5 L137.5 153.6 A84.27 84.27 0 0 1 259.8 153.8 L263.5 153.5 Z" fill="none" stroke="#008000" stroke-width="1" shape-rendering="auto"/>
<path d="M134.5 153.5 L197.4 221.0 L263.5 153.5" fill="none" stroke="#008000" stroke-width="3.300" stroke-dasharray="1.2 2.3" shape-rendering="auto"/>
<path d="M128 153h1v-1h4v-4h1v-1h1v1h1v4h4v1h1v1h-1v1h-4v4h-1v1h-1v-1h-1v-4h-4v-1h-1z" fill="#00ff00"/><path d="M192 127h1v-1h4v-4h1v-1h1v1h1v4h4v1h1v1h-1v1h-4v4h-1v1h-1v-1h-1v-4h-4v-1h-1z" fill="#00ff00"/><path d="M257 153h1v-1h4v-4h1v-1h1v1h1v4h4v1h1v1h-1v1h-4v4h-1v1h-1v-1h-1v-4h-4v-1h-1z" fill="#00ff00"/>
<rect x="97" y="65" width="8" height="8" fill="#800000"/><rect x="99" y="67" width="4" height="4" fill="#0a0a64"/><rect x="100" y="68" width="2" height="2" fill="#ff40ff"/><rect x="300" y="65" width="8" height="8" fill="#800000"/><rect x="302" y="67" width="4" height="4" fill="#0a0a64"/><rect x="303" y="68" width="2" height="2" fill="#ff40ff"/><rect x="97" y="335" width="8" height="8" fill="#800000"/><rect x="99" y="337" width="4" height="4" fill="#0a0a64"/><rect x="100" y="338" width="2" height="2" fill="#ff40ff"/><rect x="300" y="335" width="8" height="8" fill="#800000"/><rect x="302" y="337" width="4" height="4" fill="#0a0a64"/><rect x="303" y="338" width="2" height="2" fill="#ff40ff"/>
<!-- rotate icon -->
<g fill="#ff00ff" shape-rendering="crispEdges"><rect x="303" y="200" width="2" height="1"/><rect x="301" y="201" width="6" height="1"/><rect x="300" y="202" width="3" height="1"/><rect x="305" y="202" width="3" height="1"/><rect x="300" y="203" width="2" height="1"/><rect x="306" y="203" width="2" height="1"/><rect x="300" y="204" width="2" height="1"/><rect x="304" y="204" width="1" height="1"/><rect x="306" y="204" width="2" height="1"/><rect x="301" y="205" width="2" height="1"/><rect x="304" y="205" width="4" height="1"/><rect x="301" y="206" width="1" height="1"/><rect x="304" y="206" width="4" height="1"/><rect x="305" y="207" width="3" height="1"/></g>
</svg>
<!-- chart scrollbars -->
<div class="a" style="left:925px;top:79px;width:17px;height:446px;background:#f0f0f0"></div>
<div class="a" style="left:926px;top:162px;width:15px;height:62px;border:1px solid #979797;border-radius:2px;background:linear-gradient(90deg,#f5f5f5 0%,#e9e9eb 45%,#d9dadc 50%,#c9cacc 100%);box-shadow:inset 0 0 0 1px rgba(255,255,255,.7)"></div>
<svg class="a" style="left:925px;top:79px" width="17" height="446" viewBox="0 0 17 446"><polygon points="5.500,10 8.500,6 11.500,10" fill="#505050"/><polygon points="5.500,436 8.500,440 11.500,436" fill="#505050"/><path d="M5 111.500h7M5 113.500h7M5 115.500h7" stroke="#6a6a6a"/></svg>
<div class="a" style="left:501px;top:526px;width:441px;height:17px;background:#ececec;border-top:1px solid #fafafa"></div>
<div class="a" style="left:649px;top:527px;width:128px;height:15px;border:1px solid #979797;border-radius:2px;background:linear-gradient(#f5f5f5 0%,#e9e9eb 45%,#d9dadc 50%,#c9cacc 100%);box-shadow:inset 0 0 0 1px rgba(255,255,255,.7)"></div>
<svg class="a" style="left:501px;top:526px" width="424" height="17" viewBox="0 0 424 17"><polygon points="10,5.500 6,8.500 10,11.500" fill="#505050"/><polygon points="414,5.500 418,8.500 414,11.500" fill="#505050"/><path d="M210.500 5v7M212.500 5v7M214.500 5v7" stroke="#6a6a6a"/></svg>

<svg class="a" style="left:0;top:0" width="950" height="568" viewBox="0 0 950 568" shape-rendering="crispEdges" pointer-events="none"><rect x="940" y="551" width="2" height="2" fill="#fff"/><rect x="939" y="550" width="2" height="2" fill="#b8b8b8"/><rect x="937" y="554" width="2" height="2" fill="#fff"/><rect x="936" y="553" width="2" height="2" fill="#b8b8b8"/><rect x="940" y="554" width="2" height="2" fill="#fff"/><rect x="939" y="553" width="2" height="2" fill="#b8b8b8"/><rect x="934" y="557" width="2" height="2" fill="#fff"/><rect x="933" y="556" width="2" height="2" fill="#b8b8b8"/><rect x="937" y="557" width="2" height="2" fill="#fff"/><rect x="936" y="556" width="2" height="2" fill="#b8b8b8"/><rect x="940" y="557" width="2" height="2" fill="#fff"/><rect x="939" y="556" width="2" height="2" fill="#b8b8b8"/></svg>
<div class="sep" style="left:924px;top:546px;height:13px;background:#d8d8d8"></div>
<div class="a" style="left:925px;top:526px;width:17px;height:17px;background:#f0f0f0"></div>
<!--END-->
</body></html>
